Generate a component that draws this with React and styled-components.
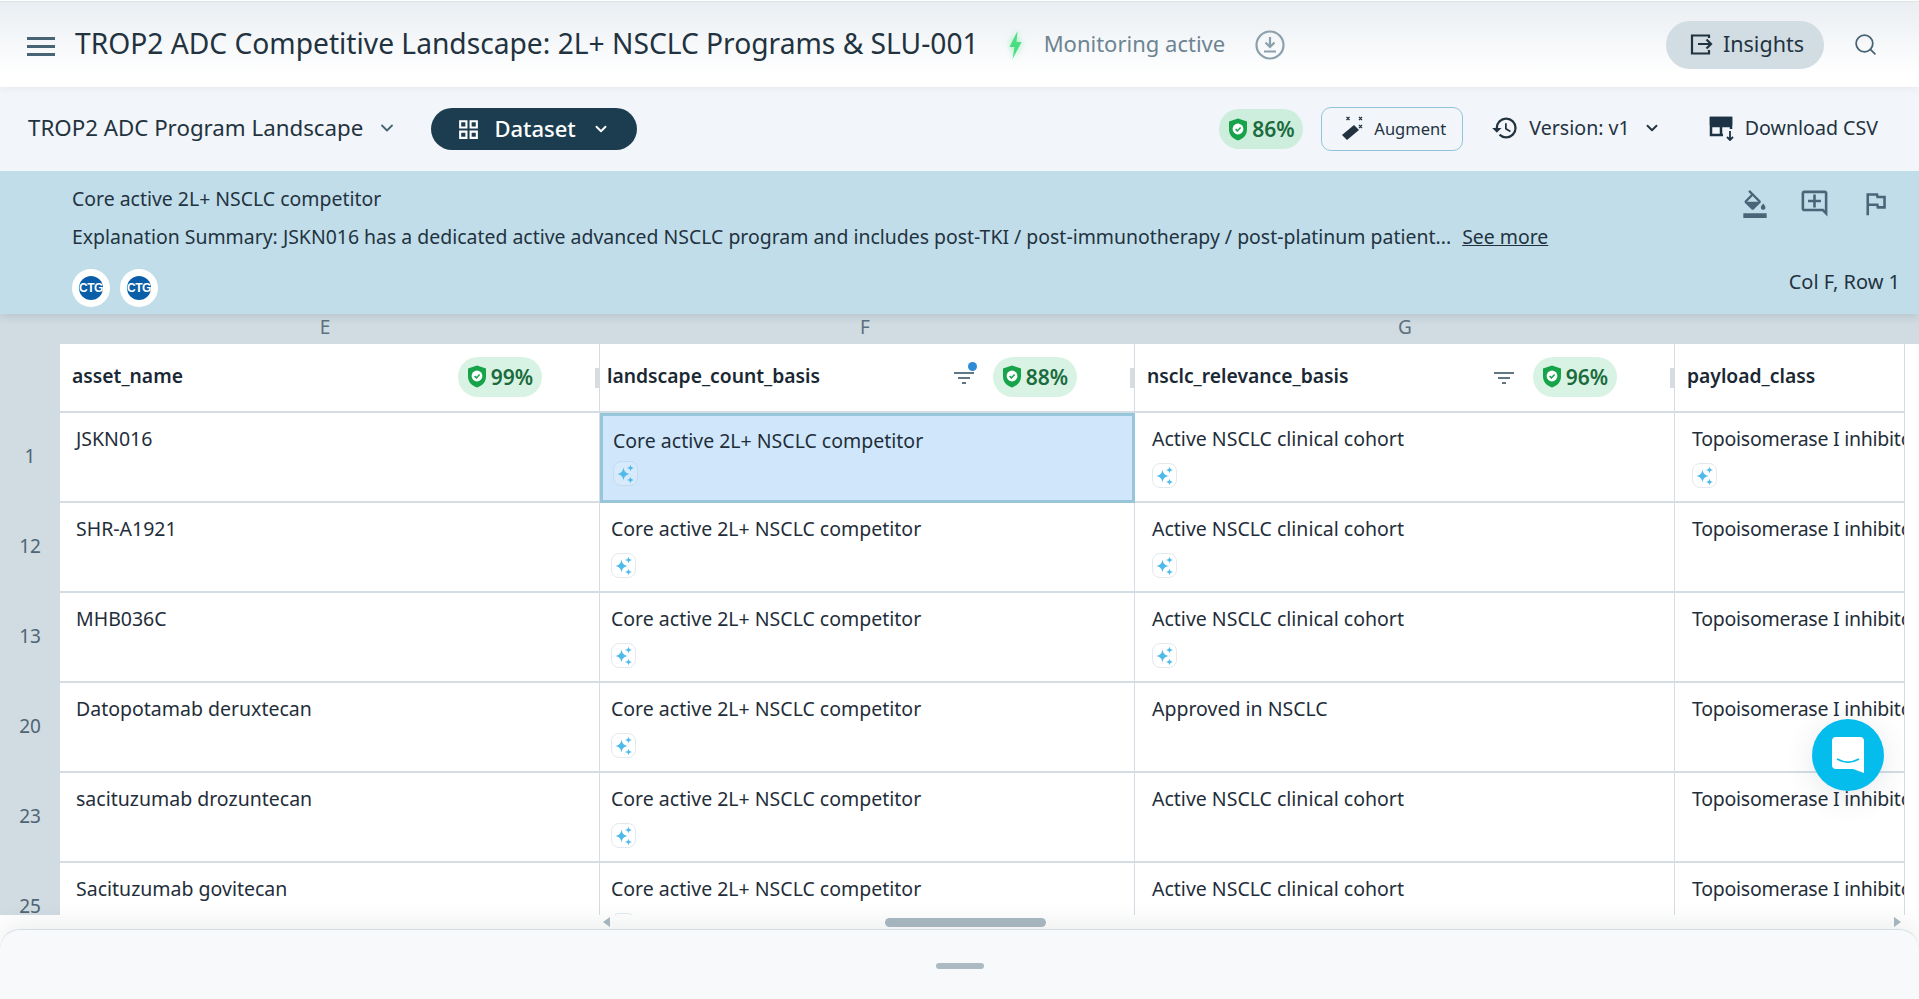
import React from 'react';
import styled, { createGlobalStyle } from 'styled-components';
import { ChevronDown, Search } from 'lucide-react';
import {
  MdOutlineGridView, MdHistory, MdFormatColorFill, MdOutlineAddComment, MdOutlineFlag,
} from 'react-icons/md';

const FONT = '"Noto Sans", "Open Sans", sans-serif';

const GlobalStyle = createGlobalStyle`
html, body {
  margin:0;
  padding:0;
  background:#fff;
  font-family:${FONT};
  color:#1f2e3a;
}
* { box-sizing:border-box; }
`;

const Page = styled.div`
position:relative;
display:flex;
flex-direction:column;
height:100vh;
overflow:hidden;
background:#fff;
`;

const TopBar = styled.header`
position:relative;
z-index:3;
display:flex;
align-items:center;
height:86px;
margin-top:1px;
padding:0 41px 0 27px;
flex-shrink:0;
border-top:1px solid #dfe3e6;
background:linear-gradient(180deg, #e9eef2 0%, #f6f8fa 50%, #fff 85%);
box-shadow:0 2px 6px rgba(60, 80, 95, 0.06);
`;

const Burger = styled.div`
display:flex;
flex-direction:column;
gap:5px;
width:28px;
margin:3px 20px 0 0;
span {
  height:3px;
  background:#486374;
}
`;

const Title = styled.h1`
margin:0 0 3px;
font-size:28.2px;
font-weight:400;
white-space:nowrap;
color:#22333f;
`;

const Status = styled.span`
margin:0 0 3px 20px;
font-size:22px;
color:#6d8493;
white-space:nowrap;
`;

const BoltIcon = styled.svg`
width:17px;
height:30px;
margin-left:28px;
filter:drop-shadow(0 0 3px rgba(74, 222, 128, 0.6));
`;

const SaveIcon = styled.svg`
width:30px;
height:30px;
margin-left:30px;
`;

const TopRight = styled.div`
display:flex;
align-items:center;
gap:29px;
margin-left:auto;
`;

const InsightsButton = styled.button`
display:flex;
align-items:center;
gap:10px;
width:158px;
height:48px;
padding:0 0 2px 24px;
border:none;
border-radius:24px;
background:#d1dce3;
color:#22333f;
font:400 21.500px ${FONT};
`;

const Toolbar = styled.div`
position:relative;
z-index:2;
display:flex;
align-items:center;
height:84px;
padding:0 41px 0 28px;
flex-shrink:0;
background:#f2f5f9;
`;

const SheetName = styled.div`
display:flex;
align-items:center;
gap:14px;
padding-bottom:3px;
font-size:22.300px;
white-space:nowrap;
color:#22333f;
`;

const DatasetButton = styled.button`
display:flex;
align-items:center;
width:206px;
height:42px;
margin-left:34px;
padding:0 0 0 25px;
border:none;
border-radius:21px;
background:#1c3d50;
color:#fff;
font:500 22px ${FONT};
span { margin:0 16px 3px 13px; }
`;

const ToolRight = styled.div`
display:flex;
align-items:center;
margin-left:auto;
`;

const ScorePill = styled.div`
display:flex;
align-items:center;
justify-content:center;
gap:4px;
width:84px;
height:40px;
flex-shrink:0;
border-radius:20px;
background:${(p) => p.$bg || '#d8f3e3'};
color:#1b6b3e;
font-size:21px;
font-weight:600;
`;

const AugmentButton = styled.button`
display:flex;
align-items:center;
gap:10px;
width:142px;
height:44px;
margin-left:18px;
padding:0 0 2px 20px;
border:1px solid #93c3d8;
border-radius:10px;
background:transparent;
color:#22333f;
font:400 16.500px ${FONT};
`;

const ToolAction = styled.div`
display:flex;
align-items:center;
gap:10px;
margin-left:${(p) => p.$left}px;
padding-bottom:3px;
font-size:19.600px;
white-space:nowrap;
color:#22333f;
`;

const VersionChevron = styled(ChevronDown)`
margin-left:3px;
`;

const InfoPanel = styled.section`
position:relative;
z-index:1;
display:flex;
justify-content:space-between;
height:143px;
padding:12px 19px 6px 72px;
flex-shrink:0;
background:#c1dde9;
box-shadow:0 3px 8px rgba(60, 80, 95, 0.14);
`;

const InfoText = styled.div`
display:flex;
flex-direction:column;
font-size:19.450px;
color:#22333f;
`;

const InfoLine = styled.div`
height:${(p) => p.$h}px;
line-height:32px;
white-space:nowrap;
a {
  margin-left:11px;
  color:#22333f;
  text-decoration:underline;
}
`;

const Sources = styled.div`
display:flex;
gap:10px;
margin-top:1px;
`;

const SourceBadge = styled.div`
display:flex;
align-items:center;
justify-content:center;
width:38px;
height:38px;
border-radius:50%;
background:#fff;
span {
  display:flex;
  align-items:center;
  justify-content:center;
  width:24px;
  height:24px;
  border-radius:50%;
  background:#0a5ea8;
  color:#fff;
  font-size:12px;
  font-weight:700;
  font-family:"Liberation Sans", sans-serif;
  letter-spacing:-0.5px;
}
`;

const InfoSide = styled.div`
display:flex;
flex-direction:column;
justify-content:space-between;
align-items:flex-end;
padding-bottom:13px;
font-size:20px;
color:#22333f;
`;

const InfoActions = styled.div`
display:flex;
align-items:center;
gap:30px;
margin:5px 9px 0 0;
color:#4a6578;
`;

const ColumnLetters = styled.div`
display:grid;
grid-template-columns:60px 540px 535px 540px 230px;
height:30px;
flex-shrink:0;
background:#d0dbe2;
font-size:19px;
line-height:26px;
color:#5c7080;
text-align:center;
div:nth-child(2) { padding-right:10px; }
div:nth-child(3) { padding-right:5px; }
`;

const SheetWrap = styled.div`
display:flex;
flex:1;
min-height:0;
width:1905px;
overflow:hidden;
`;

const Gutter = styled.div`
display:flex;
flex-direction:column;
width:60px;
padding-top:69px;
flex-shrink:0;
background:#d0dbe2;
`;

const RowNumber = styled.div`
display:flex;
align-items:center;
justify-content:center;
height:90px;
padding-bottom:4px;
flex-shrink:0;
font-size:19px;
color:#4f6474;
`;

const Grid = styled.div`
display:grid;
grid-template-columns:540px 535px 540px 230px;
grid-auto-rows:90px;
grid-template-rows:69px;
width:1845px;
`;

const HeadCell = styled.div`
position:relative;
display:flex;
align-items:center;
padding:0 57px 2px ${(p) => p.$pad}px;
border-right:1px solid #d4dde3;
border-bottom:2px solid #d4dde3;
font-size:19.300px;
font-weight:600;
color:#1a2833;
white-space:nowrap;
&::after {
  content:"";
  position:absolute;
  right:0;
  top:24px;
  width:4px;
  height:20px;
  background:${(p) => (p.$last ? 'transparent' : '#d8dce0')};
}
`;

const HeadName = styled.span`
margin:0 auto 2px 0;
`;

const FilterButton = styled.div`
position:relative;
width:23px;
height:22px;
margin-right:17px;
color:#5f7787;
`;

const FilterDot = styled.i`
position:absolute;
top:-4px;
right:-1px;
width:9px;
height:9px;
border-radius:50%;
background:#2f8bd6;
`;

const Cell = styled.div`
padding:${(p) => (p.$selected ? '11px 10px' : `12px ${p.$pad}px`)};
border-right:1px solid #d4dde3;
border-bottom:2px solid #d4dde3;
background:${(p) => (p.$selected ? '#d0e7fb' : '#fff')};
font-size:19.500px;
line-height:28px;
letter-spacing:${(p) => (p.$tight ? '-0.25px' : 'normal')};
white-space:nowrap;
overflow:hidden;
color:#1f2e3a;
${(p) => p.$selected && 'border:3px solid #97c5d9;'}
`;

const AiButton = styled.div`
display:flex;
align-items:center;
justify-content:center;
width:25px;
height:25px;
margin-top:${(p) => (p.$selected ? 6 : 10)}px;
border:1px solid ${(p) => (p.$selected ? '#c3dbee' : '#e4e9ee')};
border-radius:8px;
background:${(p) => (p.$selected ? '#d6eafb' : '#fff')};
`;

const ScrollTrack = styled.div`
display:flex;
align-items:center;
height:14px;
width:1905px;
flex-shrink:0;
padding:0 4px 0 603px;
`;

const ArrowLeft = styled.i`
width:0;
height:0;
border:5px solid transparent;
border-left:none;
border-right:7px solid #a9bac4;
`;

const ArrowRight = styled.i`
width:0;
height:0;
margin-left:auto;
border:5px solid transparent;
border-right:none;
border-left:7px solid #a9bac4;
`;

const ScrollThumb = styled.div`
width:161px;
height:9px;
margin-left:275px;
border-radius:5px;
background:#abbac3;
`;

const Drawer = styled.footer`
position:relative;
z-index:2;
display:flex;
justify-content:center;
height:70px;
padding-top:33px;
flex-shrink:0;
border-top:1px solid #d4dde3;
border-radius:20px 20px 0 0;
background:#f8f9fb;
box-shadow:0 -8px 22px rgba(50, 60, 70, 0.08);
`;

const DrawerHandle = styled.div`
width:48px;
height:6px;
border-radius:3px;
background:#abbac3;
`;

const ChatBubble = styled.button`
position:absolute;
left:1812px;
top:719px;
z-index:4;
display:flex;
align-items:center;
justify-content:center;
width:72px;
height:72px;
padding:0;
border:none;
border-radius:50%;
background:#05bdec;
box-shadow:0 6px 30px rgba(40, 60, 80, 0.12);
`;

function ShieldIcon() {
  return (
    <svg width="20" height="25" viewBox="0 0 20 24">
      <path d="M10 1l9 3v8c0 5.500-3.800 9.200-9 11C4.800 21.200 1 17.500 1 12V4z" fill="#16a34a" />
      <circle cx="10" cy="11.500" r="5.400" fill="#fff" />
      <path d="M7.600 11.600l1.800 1.800 3.200-3.400" fill="none" stroke="#16a34a" strokeWidth="1.500" />
    </svg>
  );
}

function SparkIcon() {
  return (
    <svg width="20" height="20" viewBox="0 0 20 20" fill="#4fb9ea">
      <path d="M7.500 3.500c.8 4.200 2.300 5.700 6.500 6.500-4.200.8-5.700 2.300-6.500 6.500C6.700 12.300 5.200 10.800 1 10c4.200-.8 5.700-2.300 6.500-6.500z" />
      <path d="M14.500 .5c.4 2.300 1.200 3.100 3.500 3.500-2.300.4-3.100 1.200-3.500 3.500-.4-2.300-1.200-3.100-3.500-3.500 2.300-.4 3.100-1.200 3.500-3.500z" />
      <path d="M14.500 12.500c.4 2.300 1.200 3.100 3.500 3.500-2.300.4-3.100 1.200-3.500 3.500-.4-2.300-1.200-3.100-3.500-3.500 2.300-.4 3.100-1.200 3.500-3.500z" />
    </svg>
  );
}

function Score({ value, bg }) {
  return (
    <ScorePill $bg={bg}>
      <ShieldIcon />
      {value}
    </ScorePill>
  );
}

function FilterIcon({ dot }) {
  return (
    <FilterButton>
      <svg width="23" height="22" viewBox="0 0 23 22" fill="none" stroke="currentColor" strokeWidth="2">
        <path d="M1 7h20M5 12h12M9 17h4" />
      </svg>
      {dot && <FilterDot />}
    </FilterButton>
  );
}

const columns = ['E', 'F', 'G'];

const rows = [
  { n: 1, name: 'JSKN016', g: 'Active NSCLC clinical cohort', gAi: true, hAi: true },
  { n: 12, name: 'SHR-A1921', g: 'Active NSCLC clinical cohort', gAi: true },
  { n: 13, name: 'MHB036C', g: 'Active NSCLC clinical cohort', gAi: true },
  { n: 20, name: 'Datopotamab deruxtecan', g: 'Approved in NSCLC' },
  { n: 23, name: 'sacituzumab drozuntecan', g: 'Active NSCLC clinical cohort' },
  { n: 25, name: 'Sacituzumab govitecan', g: 'Active NSCLC clinical cohort' },
];

export default function App() {
  return (
    <Page>
      <GlobalStyle />
      <TopBar>
        <Burger><span /><span /><span /></Burger>
        <Title>TROP2 ADC Competitive Landscape: 2L+ NSCLC Programs &amp; SLU-001</Title>
        <BoltIcon viewBox="2 0 14 30">
          <path d="M11 1L3 17h5l-2 12 9-17h-5z" fill="#4ade80" />
        </BoltIcon>
        <Status>Monitoring active</Status>
        <SaveIcon viewBox="0 0 30 30" fill="none" stroke="#8b9fac" strokeWidth="2.200">
          <circle cx="15" cy="15" r="13.500" />
          <path d="M15 7v10M10.500 12.500L15 17l4.500-4.500M9 21.500h12" />
        </SaveIcon>
        <TopRight>
          <InsightsButton>
            <svg width="23" height="24" viewBox="0 0 23 24" fill="none" stroke="#22333f" strokeWidth="2.200">
              <path d="M19 6V3.500H2v18h17V18M8 12h13M16.500 7.500L21 12l-4.500 4.500" />
            </svg>
            Insights
          </InsightsButton>
          <Search size={25} color="#486374" strokeWidth={1.700} />
        </TopRight>
      </TopBar>

      <Toolbar>
        <SheetName>
          TROP2 ADC Program Landscape
          <ChevronDown size={20} color="#486374" strokeWidth={2.200} />
        </SheetName>
        <DatasetButton>
          <MdOutlineGridView size={25} />
          <span>Dataset</span>
          <ChevronDown size={18} strokeWidth={2.500} />
        </DatasetButton>
        <ToolRight>
          <Score value="86%" bg="#cdeddd" />
          <AugmentButton>
            <svg width="22" height="24" viewBox="0 0 22 24" fill="#22333f">
              <path d="M12 9l5 5L5 24 0 19z" />
              <path d="M4.500 1l3 3M7.500 1l-3 3M17 1l3 3M20 1l-3 3M17 9l3 3M20 9l-3 3" stroke="#22333f" strokeWidth="1.300" />
            </svg>
            Augment
          </AugmentButton>
          <ToolAction $left={28}>
            <MdHistory size={28} />
            Version: v1
            <VersionChevron size={18} strokeWidth={2.500} />
          </ToolAction>
          <ToolAction $left={48}>
            <svg width="26" height="26" viewBox="0 0 26 26" fill="none" stroke="#1c3345" strokeWidth="2.500">
              <path d="M2 3h20v6H2z" fill="#1c3345" />
              <path d="M22 14V3H2v17h12M2 11h20M12 3v17" />
              <path d="M21 16v9M18 22l3 3 3-3" strokeWidth="1.800" />
            </svg>
            Download CSV
          </ToolAction>
        </ToolRight>
      </Toolbar>

      <InfoPanel>
        <InfoText>
          <InfoLine $h={38}>Core active 2L+ NSCLC competitor</InfoLine>
          <InfoLine $h={47}>
            Explanation Summary: JSKN016 has a dedicated active advanced NSCLC program and includes post-TKI / post-immunotherapy / post-platinum patient...
            <a href="#more">See more</a>
          </InfoLine>
          <Sources>
            <SourceBadge><span>CTG</span></SourceBadge>
            <SourceBadge><span>CTG</span></SourceBadge>
          </Sources>
        </InfoText>
        <InfoSide>
          <InfoActions>
            <MdFormatColorFill size={28} />
            <MdOutlineAddComment size={31} />
            <MdOutlineFlag size={31} />
          </InfoActions>
          <div>Col F, Row 1</div>
        </InfoSide>
      </InfoPanel>

      <ColumnLetters>
        <div />
        {columns.map((c) => <div key={c}>{c}</div>)}
      </ColumnLetters>

      <SheetWrap>
        <Gutter>
          {rows.map((r) => <RowNumber key={r.n}>{r.n}</RowNumber>)}
        </Gutter>
        <Grid>
          <HeadCell $pad={12}>
            <HeadName>asset_name</HeadName>
            <Score value="99%" />
          </HeadCell>
          <HeadCell $pad={7}>
            <HeadName>landscape_count_basis</HeadName>
            <FilterIcon dot />
            <Score value="88%" />
          </HeadCell>
          <HeadCell $pad={12}>
            <HeadName>nsclc_relevance_basis</HeadName>
            <FilterIcon />
            <Score value="96%" />
          </HeadCell>
          <HeadCell $pad={12} $last>
            <HeadName>payload_class</HeadName>
          </HeadCell>
          {rows.map((r, i) => (
            <React.Fragment key={r.n}>
              <Cell $pad={16}>{r.name}</Cell>
              <Cell $pad={11} $selected={i === 0}>
                Core active 2L+ NSCLC competitor
                <AiButton $selected={i === 0}><SparkIcon /></AiButton>
              </Cell>
              <Cell $pad={17}>
                {r.g}
                {r.gAi && <AiButton><SparkIcon /></AiButton>}
              </Cell>
              <Cell $pad={17} $tight>
                Topoisomerase I inhibitor
                {r.hAi && <AiButton><SparkIcon /></AiButton>}
              </Cell>
            </React.Fragment>
          ))}
        </Grid>
      </SheetWrap>

      <ScrollTrack>
        <ArrowLeft />
        <ScrollThumb />
        <ArrowRight />
      </ScrollTrack>

      <Drawer>
        <DrawerHandle />
      </Drawer>

      <ChatBubble>
        <svg width="34" height="38" viewBox="0 0 34 38">
          <path d="M5 1h24a4 4 0 014 4v32l-11-4H5a4 4 0 01-4-4V5a4 4 0 014-4z" fill="#fff" />
          <path d="M6 23c7 4 15 4 22 0" fill="none" stroke="#05bdec" strokeWidth="1.800" />
        </svg>
      </ChatBubble>
    </Page>
  );
}
